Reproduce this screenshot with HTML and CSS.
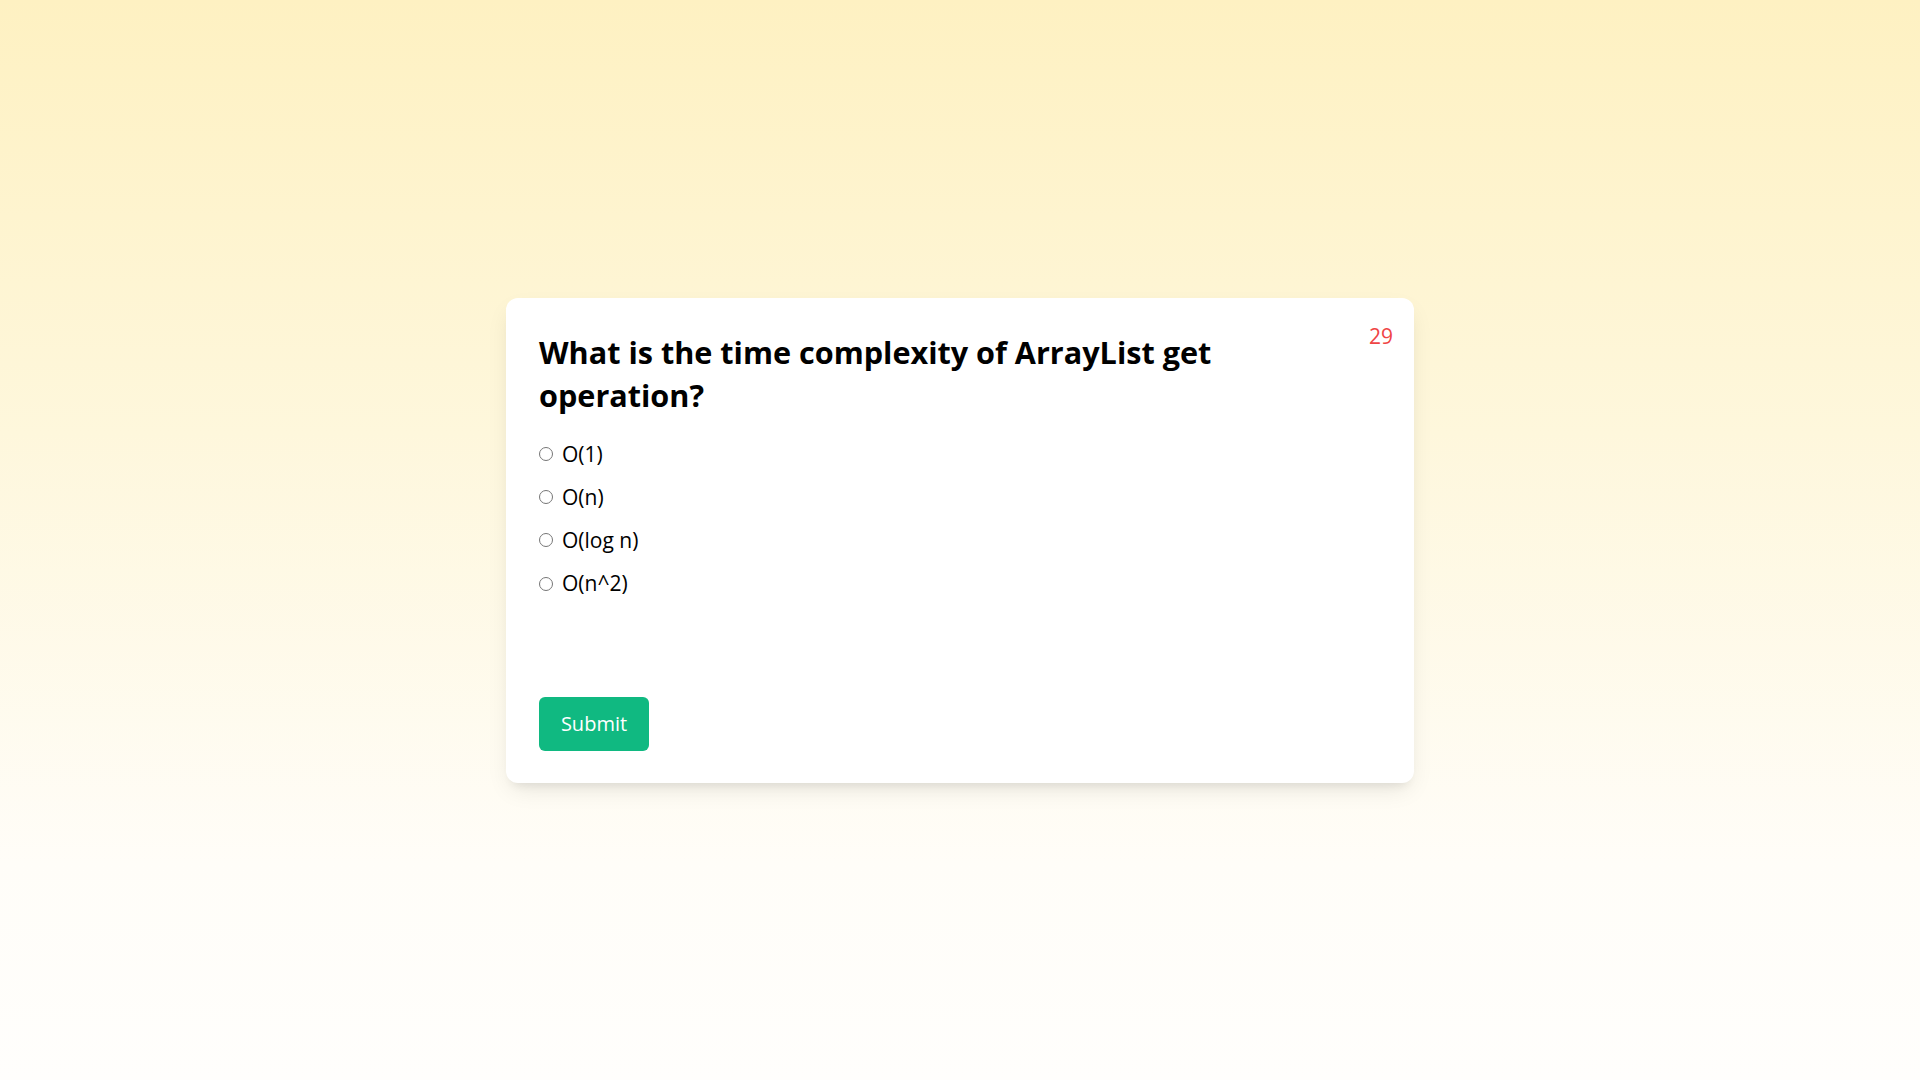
FILE: index.html
```html
<!DOCTYPE html>
<html lang="en">
<head>
<meta charset="utf-8">
<title>Quiz</title>
<link rel="stylesheet" href="styles.css">
</head>
<body>
<main class="page">
  <section class="card">
    <div class="timer">29</div>
    <h1 class="question">What is the time complexity of ArrayList get operation?</h1>
    <form class="options">
      <label class="option"><input type="radio" name="answer" class="radio"><span>O(1)</span></label>
      <label class="option"><input type="radio" name="answer" class="radio"><span>O(n)</span></label>
      <label class="option"><input type="radio" name="answer" class="radio"><span>O(log n)</span></label>
      <label class="option"><input type="radio" name="answer" class="radio"><span>O(n^2)</span></label>
    </form>
    <button class="submit" type="button">Submit</button>
  </section>
</main>
</body>
</html>
```

FILE: styles.css
```css
* { box-sizing: border-box; }
html, body { margin: 0; height: 100%; }
body {
  font-family: "Open Sans", "Noto Sans", sans-serif;
  background: linear-gradient(180deg, #fef1c2 0%, #fef7dc 40%, #fffdf8 80%, #fffefc 100%);
  color: #000;
}
.page {
  min-height: 100vh;
  display: flex;
  align-items: center;
  justify-content: center;
}
.card {
  position: relative;
  width: 908px;
  height: 485px;
  background: #fff;
  border-radius: 12px;
  box-shadow: 0 10px 25px -5px rgba(0,0,0,0.1), 0 8px 10px -6px rgba(0,0,0,0.08);
  padding: 33px 33px 32px;
  display: flex;
  flex-direction: column;
}
.timer {
  position: absolute;
  top: 24px;
  right: 21px;
  color: #ef4444;
  font-size: 21px;
  line-height: 28px;
}
.question {
  margin: 0 60px 0 0;
  font-size: 30.6px;
  line-height: 43px;
  font-weight: 700;
}
.options {
  display: flex;
  flex-direction: column;
  gap: 14.2px;
  margin-top: 23px;
}
.option {
  display: flex;
  align-items: center;
  font-size: 21px;
  line-height: 29px;
}
.radio {
  width: 14px;
  height: 14px;
  margin: 0 9px 0 0;
}
.submit {
  margin-top: auto;
  align-self: flex-start;
  background: #10b981;
  color: #fff;
  border: 0;
  border-radius: 6px;
  width: 110px;
  height: 54px;
  font-family: inherit;
  font-size: 20px;
  cursor: pointer;
}
```
